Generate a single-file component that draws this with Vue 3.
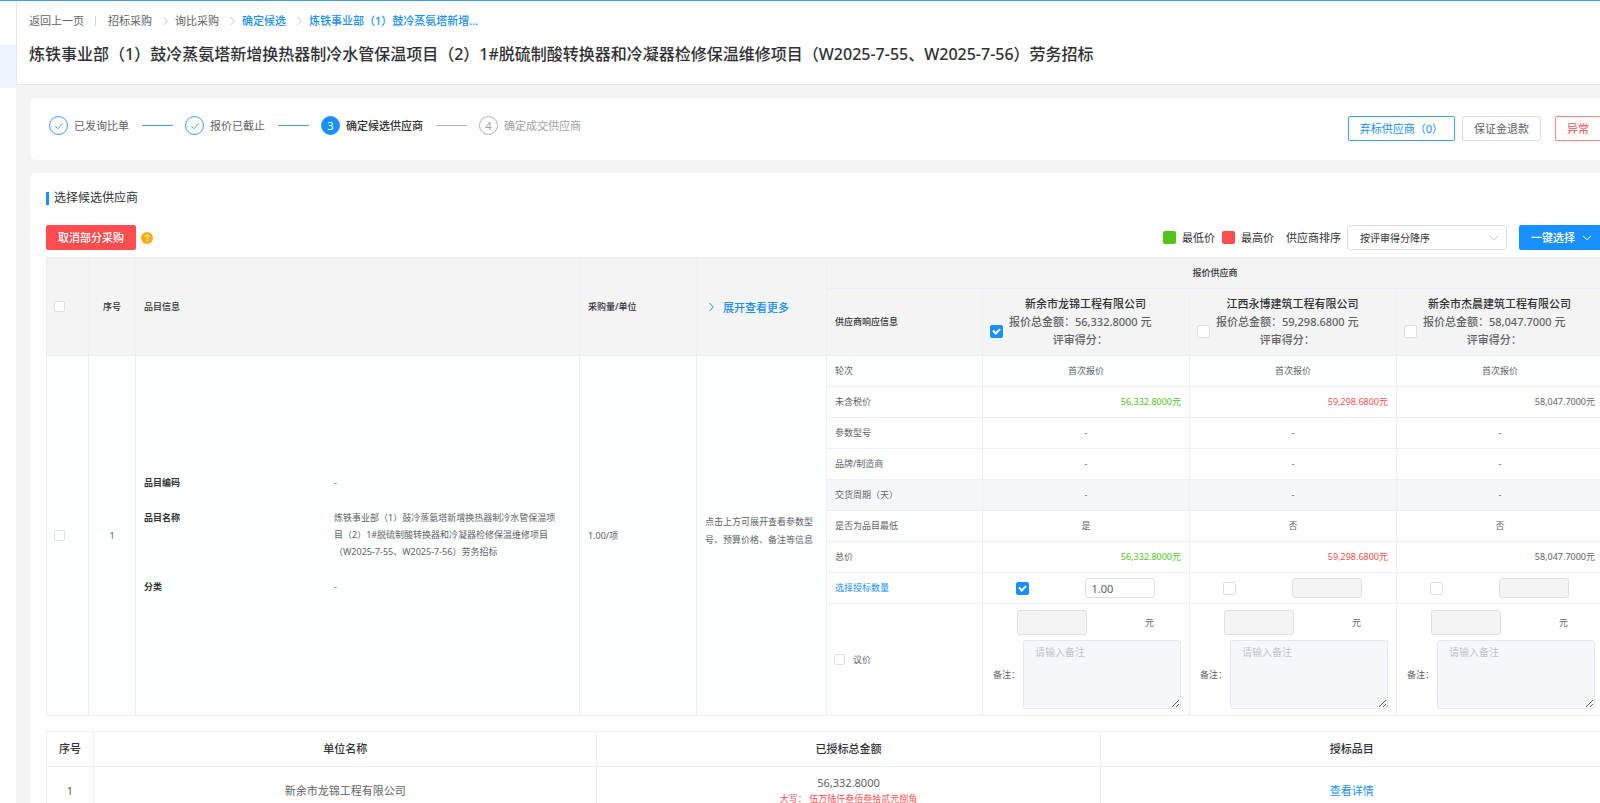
<script setup>
import { reactive, ref } from 'vue'

const projectTitle =
  '炼铁事业部（1）鼓冷蒸氨塔新增换热器制冷水管保温项目（2）1#脱硫制酸转换器和冷凝器检修保温维修项目（W2025-7-55、W2025-7-56）劳务招标'

const crumbs = [
  { text: '招标采购', active: false },
  { text: '询比采购', active: false },
  { text: '确定候选', active: true },
  { text: '炼铁事业部（1）鼓冷蒸氨塔新增...', active: true }
]

const steps = [
  { text: '已发询比单', state: 'done' },
  { text: '报价已截止', state: 'done' },
  { text: '确定候选供应商', state: 'current' },
  { text: '确定成交供应商', state: 'wait' }
]

const suppliers = reactive([
  { name: '新余市龙锦工程有限公司', total: '56,332.8000', lowest: '是', tone: 'low', picked: true, awarded: true, qty: '1.00' },
  { name: '江西永博建筑工程有限公司', total: '59,298.6800', lowest: '否', tone: 'high', picked: false, awarded: false, qty: '' },
  { name: '新余市杰晨建筑工程有限公司', total: '58,047.7000', lowest: '否', tone: '', picked: false, awarded: false, qty: '' }
])

const rows = [
  { label: '未含税价', value: (s) => s.total + '元', price: true },
  { label: '参数型号', value: () => '-' },
  { label: '品牌/制造商', value: () => '-' },
  { label: '交货周期（天）', value: () => '-', hover: true },
  { label: '是否为品目最低', value: (s) => s.lowest },
  { label: '总价', value: (s) => s.total + '元', price: true }
]

const sort = ref('score')
</script>

<template>
  <div class="shell">
    <aside class="side"><div class="side-active"></div></aside>
    <main class="main">
      <header class="head">
        <nav class="crumbs" aria-label="面包屑">
          <a href="#" class="back">返回上一页</a>
          <span class="bar"></span>
          <template v-for="(c, i) in crumbs" :key="c.text">
            <svg v-if="i > 0" class="sep" viewBox="0 0 5 10"><path d="M0.5 1L4.3 5L0.5 9" /></svg>
            <a href="#" :class="{ active: c.active }">{{ c.text }}</a>
          </template>
        </nav>
        <h1>{{ projectTitle }}</h1>
      </header>

      <section class="card step-card">
        <ol class="steps">
          <li v-for="(s, i) in steps" :key="s.text" :class="s.state">
            <span class="dot">
              <svg v-if="s.state === 'done'" viewBox="0 0 10 10"><path d="M1.2 5.2L3.8 7.7L8.8 2.3" /></svg>
              <template v-else>{{ i + 1 }}</template>
            </span>
            <span class="step-text">{{ s.text }}</span>
            <span v-if="i < steps.length - 1" class="line"></span>
          </li>
        </ol>
        <div class="actions">
          <button class="btn outline-blue">弃标供应商（0）</button>
          <button class="btn plain">保证金退款</button>
          <button class="btn outline-red">异常</button>
        </div>
      </section>

      <section class="card body-card">
        <h2>选择候选供应商</h2>
        <div class="toolbar">
          <button class="btn red">取消部分采购</button>
          <svg class="help" viewBox="0 0 12 12">
            <circle cx="6" cy="6" r="6" fill="#faad14" />
            <path d="M4.3 4.8C4.3 2.6 7.7 2.6 7.7 4.7C7.7 5.9 6 5.9 6 7.2" fill="none" stroke="#fff" />
            <circle cx="6" cy="8.8" r="0.7" fill="#fff" />
          </svg>
          <div class="tools">
            <span class="swatch green"></span><span class="legend">最低价</span>
            <span class="swatch pink"></span><span class="legend last">最高价</span>
            <label for="sort">供应商排序</label>
            <div class="select">
              <select id="sort" v-model="sort">
                <option value="score">按评审得分降序</option>
              </select>
              <svg viewBox="0 0 10 6"><path d="M1 0.8L5 4.8L9 0.8" /></svg>
            </div>
            <button class="btn blue">
              一键选择
              <svg viewBox="0 0 10 6"><path d="M1 0.8L5 4.8L9 0.8" /></svg>
            </button>
          </div>
        </div>

        <table class="grid items">
          <colgroup>
            <col class="c-check" /><col class="c-idx" /><col /><col class="c-qty" /><col class="c-more" />
            <col class="c-label" /><col class="c-sup" /><col class="c-sup" /><col class="c-sup" />
          </colgroup>
          <thead>
            <tr class="h1">
              <th rowspan="2" class="pick"><input type="checkbox" class="box" aria-label="全选" /></th>
              <th rowspan="2" class="center">序号</th>
              <th rowspan="2">品目信息</th>
              <th rowspan="2">采购量/单位</th>
              <th rowspan="2">
                <button class="expand">
                  <svg viewBox="0 0 5 10"><path d="M0.5 1L4.3 5L0.5 9" /></svg>展开查看更多
                </button>
              </th>
              <th colspan="4" class="center">报价供应商</th>
            </tr>
            <tr class="h2">
              <th>供应商响应信息</th>
              <th v-for="s in suppliers" :key="s.name" class="sup">
                <div class="sup-name">{{ s.name }}</div>
                <div class="sup-info">
                  <input v-model="s.picked" type="checkbox" class="box big" :aria-label="s.name" />
                  <div>
                    <div>报价总金额：{{ s.total }} 元</div>
                    <div>评审得分：</div>
                  </div>
                </div>
              </th>
            </tr>
          </thead>
          <tbody>
            <tr class="tint">
              <td rowspan="9" class="pick"><input type="checkbox" class="box" aria-label="选择品目" /></td>
              <td rowspan="9" class="center">1</td>
              <td rowspan="9">
                <dl class="info">
                  <dt>品目编码</dt><dd>-</dd>
                  <dt>品目名称</dt><dd>{{ projectTitle }}</dd>
                  <dt>分类</dt><dd>-</dd>
                </dl>
              </td>
              <td rowspan="9">1.00/项</td>
              <td rowspan="9"><p class="note">点击上方可展开查看参数型号、预算价格、备注等信息</p></td>
              <td>轮次</td>
              <td v-for="s in suppliers" :key="s.name" class="center">首次报价</td>
            </tr>
            <tr v-for="r in rows" :key="r.label" :class="{ hover: r.hover }">
              <td>{{ r.label }}</td>
              <td v-for="s in suppliers" :key="s.name" :class="r.price ? ['right', s.tone] : 'center'">{{ r.value(s) }}</td>
            </tr>
            <tr>
              <td><a href="#" class="link">选择授标数量</a></td>
              <td v-for="s in suppliers" :key="s.name" class="pick">
                <div class="award">
                  <input v-model="s.awarded" type="checkbox" class="box big" aria-label="授标" />
                  <input v-model="s.qty" type="text" class="field short" :disabled="!s.awarded" aria-label="授标数量" />
                </div>
              </td>
            </tr>
            <tr class="bargain">
              <td class="pick"><label class="talk"><input type="checkbox" class="box" />议价</label></td>
              <td v-for="(s, i) in suppliers" :key="s.name" class="pick">
                <div class="offer">
                  <input type="text" class="field" disabled aria-label="议价金额" /><span>元</span>
                </div>
                <div class="remark">
                  <label :for="'remark' + i">备注：</label>
                  <textarea :id="'remark' + i" placeholder="请输入备注" disabled></textarea>
                </div>
              </td>
            </tr>
          </tbody>
        </table>

        <table class="grid result">
          <colgroup><col class="c-no" /><col /><col /><col /></colgroup>
          <thead>
            <tr><th>序号</th><th>单位名称</th><th>已授标总金额</th><th>授标品目</th></tr>
          </thead>
          <tbody>
            <tr>
              <td>1</td>
              <td>新余市龙锦工程有限公司</td>
              <td>56,332.8000<div class="words">大写： 伍万陆仟叁佰叁拾贰元捌角</div></td>
              <td><a href="#" class="link">查看详情</a></td>
            </tr>
          </tbody>
        </table>
      </section>
    </main>
  </div>
</template>

<style>
body {
  margin: 0;
}
</style>

<style scoped>
.shell {
  display: flex;
  height: 100vh;
  overflow: hidden;
  box-sizing: border-box;
  border-top: 1px solid #409eff;
  background: #f4f4f4;
  color: #606266;
  font-family: "Noto Sans", "Noto Sans CJK SC", sans-serif;
  font-size: 11px;
  line-height: 18px;
}
.shell * {
  box-sizing: border-box;
}
button,
input,
select,
textarea {
  font-family: inherit;
  color: inherit;
}
a {
  color: inherit;
  text-decoration: none;
}
.side {
  flex: 0 0 16px;
  padding-top: 44px;
  background: #fff;
}
.side-active {
  height: 43px;
  background: #ecf5ff;
}
.main {
  flex: 0 0 calc(100% + 4px);
}
.head {
  padding: 11px 12px 18px;
  border-left: 1px solid #e8e8e8;
  border-bottom: 1px solid #e8e8e8;
  background: #fff;
}
.crumbs {
  display: flex;
  align-items: center;
}
.crumbs .active {
  color: #1890ff;
  font-weight: 500;
}
.bar {
  width: 1px;
  height: 10px;
  margin: 0 12px 0 11px;
  background: #d4d7de;
}
.sep {
  width: 5px;
  height: 10px;
  margin: 0 7px 0 11px;
  fill: none;
  stroke: #c0c4cc;
}
h1 {
  margin: 12px 0 0;
  color: #303133;
  font-size: 16px;
  line-height: 24px;
  font-weight: 500;
  white-space: nowrap;
}
.card {
  margin: 13px 0 0 14px;
  border-radius: 6px;
  background: #fff;
}
.step-card {
  display: flex;
  justify-content: space-between;
  padding: 18px 19px 19px;
}
.steps {
  display: flex;
  height: 19px;
  margin: 0;
  padding: 0;
  list-style: none;
}
.steps li {
  display: flex;
  align-items: center;
}
.dot {
  display: flex;
  align-items: center;
  justify-content: center;
  width: 19px;
  height: 19px;
  margin-right: 6px;
  border: 1px solid #409eff;
  border-radius: 50%;
}
.dot svg {
  width: 10px;
  height: 10px;
  fill: none;
  stroke: #409eff;
}
.line {
  width: 31px;
  height: 1px;
  margin: 0 12px 0 13px;
  background: #409eff;
}
.current .dot {
  border-color: #1890ff;
  background: #1890ff;
  color: #fff;
}
.current .step-text {
  color: #303133;
  font-weight: 500;
}
.current .line {
  background: #b4b4b4;
}
.wait {
  color: #a0a0a0;
}
.wait .dot {
  border-color: #b4b4b4;
}
.actions {
  display: flex;
}
.btn {
  height: 25px;
  padding: 0 11px;
  border: 1px solid;
  border-radius: 2px;
  background: #fff;
  font-size: 11px;
  line-height: 18px;
  white-space: nowrap;
}
.outline-blue {
  border-color: #409eff;
  color: #1890ff;
}
.plain {
  margin: 0 14px 0 7px;
  border-color: #dcdfe6;
}
.outline-red {
  border-color: #ff8587;
  color: #ff4d4f;
}
.red {
  border-color: #ff4d4f;
  background: #ff4d4f;
  color: #fff;
  font-weight: 500;
}
.blue {
  display: flex;
  align-items: center;
  border-color: #1890ff;
  background: #1890ff;
  color: #fff;
  font-weight: 500;
}
.blue svg {
  width: 10px;
  height: 6px;
  margin-left: 7px;
  fill: none;
  stroke: #fff;
}
.body-card {
  padding: 16px;
}
h2 {
  display: flex;
  align-items: center;
  margin: 0 0 18px;
  color: #303133;
  font-size: 12px;
  line-height: 18px;
  font-weight: 400;
}
h2::before {
  content: "";
  width: 3px;
  height: 13px;
  margin-right: 5px;
  background: #1890ff;
}
.toolbar {
  display: flex;
  align-items: center;
  margin-bottom: 7px;
}
.help {
  width: 12px;
  height: 12px;
  margin-left: 5px;
}
.tools {
  display: flex;
  align-items: center;
  margin-left: auto;
  color: #303133;
}
.swatch {
  width: 13px;
  height: 13px;
  margin-right: 6px;
  border-radius: 2px;
}
.green {
  background: #52c41a;
}
.pink {
  background: #ff4d4f;
}
.legend {
  margin-right: 7px;
}
.legend.last {
  margin-right: 12px;
}
.select {
  position: relative;
  margin: 0 12px 0 6px;
}
.select select {
  display: block;
  width: 160px;
  height: 25px;
  padding: 0 12px;
  border: 1px solid #dcdfe6;
  border-radius: 3px;
  background: #fff;
  font-size: 10px;
  appearance: none;
}
.select svg {
  position: absolute;
  top: 10px;
  right: 8px;
  width: 10px;
  height: 6px;
  fill: none;
  stroke: #c0c4cc;
}
.grid {
  width: 100%;
  table-layout: fixed;
  border-collapse: separate;
  border-spacing: 0;
  border-top: 1px solid #ebeef5;
  border-left: 1px solid #ebeef5;
  font-size: 9px;
}
.grid th,
.grid td {
  height: 31px;
  padding: 0 8px;
  border-right: 1px solid #eef0f6;
  border-bottom: 1px solid #ebeef5;
  text-align: left;
  vertical-align: middle;
}
.grid th {
  background: #f4f4f4;
  color: #303133;
  font-weight: 500;
}
.grid .pick,
.grid .sup {
  padding-left: 7px;
}
.c-check { width: 42px; }
.c-idx { width: 47px; }
.c-qty { width: 117px; }
.c-more { width: 130px; }
.c-label { width: 156px; }
.c-sup { width: 207px; }
.c-no { width: 47px; }
.grid .h2 th {
  height: 67px;
}
.grid .center {
  text-align: center;
}
.grid .right {
  text-align: right;
}
.low {
  color: #52c41a;
}
.high {
  color: #ff4d4f;
}
.tint td {
  background: #fdfffe;
}
.hover td {
  background: #f5f7fa;
}
.box {
  display: block;
  flex: none;
  position: relative;
  width: 11px;
  height: 11px;
  margin: 0;
  border: 1px solid #dcdfe6;
  border-radius: 2px;
  background: #fff;
  appearance: none;
}
.box.big {
  width: 13px;
  height: 13px;
}
.box:checked {
  border-color: #1890ff;
  background: #1890ff;
}
.box:checked::after {
  content: "";
  position: absolute;
  top: 1px;
  left: 3px;
  width: 3px;
  height: 5px;
  border: solid #fff;
  border-width: 0 2px 2px 0;
  transform: rotate(45deg);
}
.expand {
  display: flex;
  align-items: center;
  padding: 0 0 0 4px;
  border: 0;
  background: none;
  color: #1890ff;
  font-size: 11px;
  font-weight: 500;
  white-space: nowrap;
}
.expand svg {
  width: 5px;
  height: 10px;
  margin-right: 9px;
  fill: none;
  stroke: #1890ff;
}
.grid .sup {
  color: #606266;
  font-size: 11px;
  text-align: center;
}
.sup-name {
  color: #303133;
}
.sup-info {
  display: flex;
  align-items: center;
  gap: 6px;
  white-space: nowrap;
}
.info {
  display: grid;
  grid-template-columns: 190px 1fr;
  row-gap: 18px;
  margin: 0 8px 3px 0;
  line-height: 17px;
}
.info dt {
  color: #303133;
  font-weight: 700;
}
.info dd {
  margin: 0;
}
.note {
  margin: 0 0 9px;
}
.link {
  color: #1890ff;
}
.award {
  display: grid;
  grid-template-columns: 1fr 1fr;
  align-items: center;
}
.award .box {
  margin-left: 26px;
}
.field {
  width: 70px;
  height: 25px;
  padding: 0 5px;
  border: 1px solid #dcdfe6;
  border-radius: 3px;
  background: #fff;
  font-size: 11px;
}
.field.short {
  height: 20px;
}
.field:disabled {
  background: #f4f4f4;
}
.grid .bargain td {
  height: 112px;
}
.talk {
  display: flex;
  align-items: center;
  gap: 8px;
}
.offer {
  display: flex;
  align-items: center;
  gap: 58px;
  margin: 0 0 5px 27px;
}
.remark {
  display: flex;
  align-items: center;
  gap: 3px;
  padding-left: 3px;
}
.remark label {
  flex: none;
}
.remark textarea {
  display: block;
  flex: 1;
  min-width: 0;
  height: 69px;
  padding: 2px 11px;
  border: 1px solid #e4e7ed;
  border-radius: 3px;
  background: #f5f7fa;
  font-size: 10px;
  line-height: 18px;
  resize: vertical;
}
.remark textarea::placeholder {
  color: #c0c4cc;
}
.result {
  margin-top: 15px;
  font-size: 11px;
}
.grid.result th,
.grid.result td {
  height: 35px;
  text-align: center;
}
.grid.result th {
  background: #fff;
}
.grid.result td {
  height: 49px;
  line-height: 16px;
}
.words {
  color: #ff4d4f;
  font-size: 9px;
}
</style>
